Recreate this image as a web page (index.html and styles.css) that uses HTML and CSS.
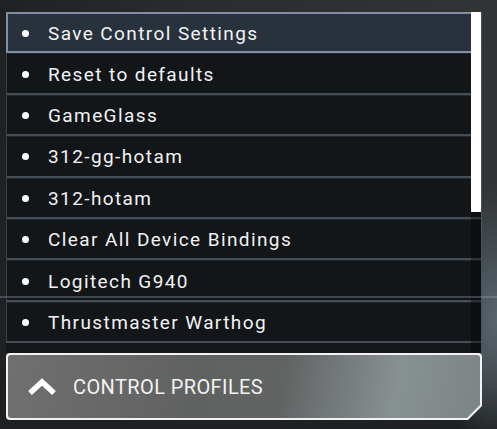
FILE: index.html
```html
<!DOCTYPE html>
<html>
  <head>
    <meta charset="UTF-8">
    <title>Control Profiles</title>
    <link rel="stylesheet" href="styles.css">
  </head>
  <body>
    <div class="menu">
      <div class="list">
        <ul class="items">
          <li class="item selected"><span class="dot"></span>Save Control Settings</li>
          <li class="item"><span class="dot"></span>Reset to defaults</li>
          <li class="item"><span class="dot"></span>GameGlass</li>
          <li class="item"><span class="dot"></span>312-gg-hotam</li>
          <li class="item"><span class="dot"></span>312-hotam</li>
          <li class="item"><span class="dot"></span>Clear All Device Bindings</li>
          <li class="item"><span class="dot"></span>Logitech G940</li>
          <li class="item"><span class="dot"></span>Thrustmaster Warthog</li>
        </ul>
        <!-- scroll track sits on top of the rows -->
        <div class="track"><div class="thumb"></div></div>
      </div>
      <div class="profiles">
        <div class="face">
          <svg class="chevron" width="30" height="20" viewBox="0 0 30 20">
            <polyline points="3,16 15,5 27,16" fill="none" stroke="#fff" stroke-width="5.5"/>
          </svg>
          <span>CONTROL PROFILES</span>
        </div>
      </div>
    </div>
    <div class="glare"></div>
  </body>
</html>
```

FILE: styles.css
```css
html, body {
  margin: 0;
  height: 100%;
}
body {
  font-family: Roboto, "DejaVu Sans", sans-serif;
  color: #f2f2f2;
  background:
    radial-gradient(ellipse 70px 130px at 100% 74%, #58666e 0%, rgba(88,102,110,0) 100%),
    linear-gradient(to bottom, rgba(20,22,24,0) 85%, #1d1f21 100%),
    linear-gradient(to right, #1f2123 0, #2a2c2e 40%, #323436 100%);
  overflow: hidden;
}
.menu {
  width: 476px;
  padding: 12px 0 0 6px;
}
.list {
  position: relative;
  height: 341px;
  overflow: hidden;
  background: #15181b;
  border-right: 1px solid #4a535a;
}
.items {
  list-style: none;
  margin: 0;
  padding: 0;
}
.item {
  box-sizing: border-box;
  height: 41.4px;
  display: flex;
  align-items: center;
  padding: 2px 0 0 15px;
  font-size: 19px;
  letter-spacing: 1.4px;
  background: #131619;
  border-left: 1px solid #3b434a;
  border-bottom: 2px solid #454e57;
  box-shadow: inset 0 1px 0 #22282d;
}
.item.selected {
  background: #28323c;
  border: 2px solid #7f90a4;
  padding-left: 14px;
  box-shadow: none;
}
.dot {
  width: 7px;
  height: 7px;
  border-radius: 50%;
  background: #fff;
  margin-right: 19px;
  flex: none;
}
.track {
  position: absolute;
  top: 0;
  right: 0;
  width: 10px;
  height: 100%;
  background: rgba(0, 0, 0, 0.35);
}
.thumb {
  height: 200px;
  background: #fff;
}
.profiles {
  width: 476px;
  height: 67px;
  background: #f2f2f2;
  border-radius: 4px;
  clip-path: polygon(0 0, 100% 0, 100% calc(100% - 14px), calc(100% - 14px) 100%, 0 100%);
}
.face {
  box-sizing: border-box;
  height: 63px;
  margin: 0 2px;
  position: relative;
  top: 2px;
  border-radius: 3px;
  clip-path: polygon(0 0, 100% 0, 100% calc(100% - 13px), calc(100% - 13px) 100%, 0 100%);
  background: linear-gradient(100deg, #707070 0%, #606161 40%, #626464 58%, #889192 82%, #7c8485 100%);
  display: flex;
  align-items: center;
  padding-left: 19px;
  font-size: 20px;
  letter-spacing: 0.4px;
}
.chevron {
  margin-right: 16px;
}
.glare {
  position: absolute;
  left: 0;
  right: 0;
  top: 296px;
  height: 2px;
  background: rgba(150, 160, 166, 0.35);
}
```
